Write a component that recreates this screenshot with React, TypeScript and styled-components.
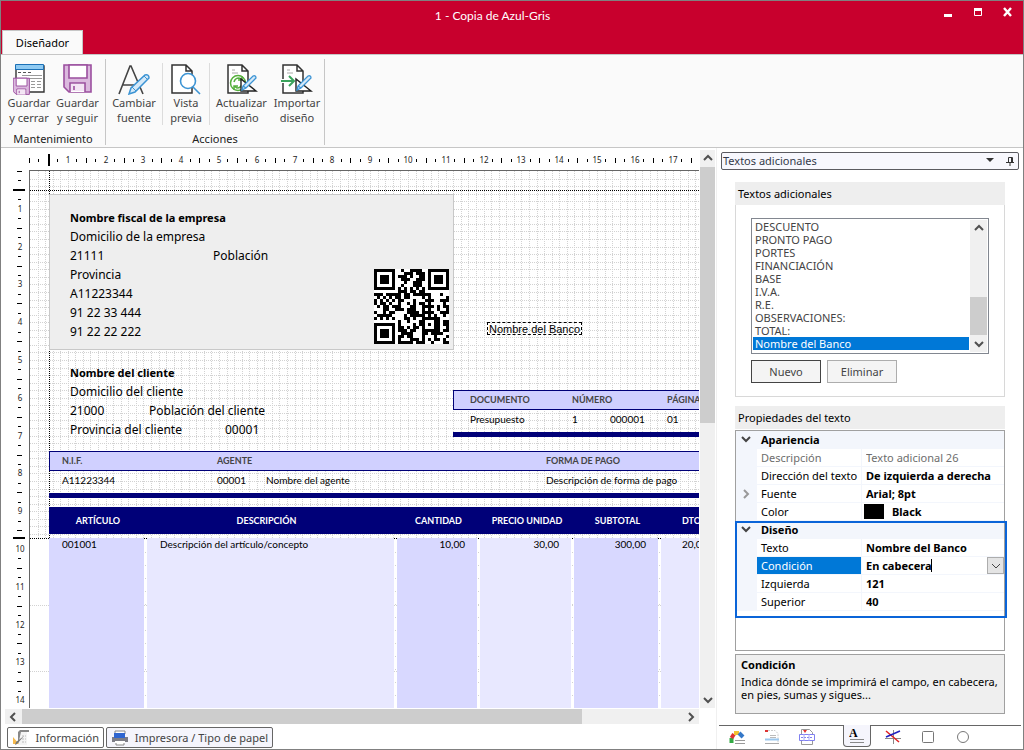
import React from "react";
import styled, { createGlobalStyle, css } from "styled-components";

const ui = `"Noto Sans", "Open Sans", sans-serif`;
const narrow = `Lato, "Noto Sans", sans-serif`;
const c = {
  brand: "#c8002d",
  chrome: "#fafafa",
  line: "#c6c6c6",
  navy: "#000078",
  lilac: "#d0d0ff",
  select: "#0078d7",
  track: "#f0f0f0",
  thumb: "#cdcdcd",
  frame: "#a0a0a0",
  purple: "#9b4f9f",
  blue: "#3c94d4",
  green: "#3aa35c",
};

const GlobalStyle = createGlobalStyle`
  *, *::before, *::after { box-sizing: border-box; }
  body { margin: 0; background: #fff; font-family: ${ui}; font-size: 11px; line-height: 15px; color: #000; }
  button, input { font: inherit; color: inherit; margin: 0; padding: 0; border: 0; background: none; }
  h2, p, ul { margin: 0; padding: 0; font: inherit; list-style: none; }
  svg { display: block; flex: none; }
`;

/* ---------- window frame ---------- */

const Window = styled.div`
  display: flex;
  flex-direction: column;
  min-height: 100vh;
  border: 1px solid #808080;
`;

const TitleBar = styled.header`
  display: flex;
  flex-direction: column;
  justify-content: space-between;
  height: 53px;
  padding-left: 1px;
  background: ${c.brand};
`;

const TitleRow = styled.div`
  display: grid;
  grid-template-columns: 1fr auto;
  height: 29px;
`;

const Title = styled.h2`
  padding: 7px 0 0 51px;
  font-family: ${narrow};
  font-size: 12px;
  text-align: center;
  color: #fff;
`;

const Controls = styled.div`
  display: flex;
  height: 22px;
  padding-right: 1px;
`;

const ControlButton = styled.button`
  display: flex;
  align-items: center;
  justify-content: center;
  width: 30px;
  color: #fff;
`;

const Tab = styled.button`
  align-self: flex-start;
  width: 81px;
  height: 24px;
  border: 1px solid ${c.line};
  border-bottom: 0;
  background: ${c.chrome};
`;

/* ---------- ribbon ---------- */

const Ribbon = styled.nav`
  display: flex;
  height: 94px;
  padding: 4px 0 2px;
  border-top: 1px solid ${c.line};
  border-bottom: 1px solid ${c.line};
  background: ${c.chrome};
`;

const RibbonGroup = styled.section`
  display: flex;
  flex-direction: column;
  justify-content: space-between;
  border-right: 1px solid ${c.line};
`;

const RibbonButtons = styled.div<{ $pad?: boolean }>`
  display: flex;
  padding: ${(p) => (p.$pad ? "4px 3px 0 4px" : "4px 3px 0 0")};
`;

const RibbonButton = styled.button<{ $w: number; $line?: boolean }>`
  display: flex;
  flex-direction: column;
  align-items: center;
  width: ${(p) => p.$w}px;
  height: 62px;
  line-height: 15px;
  color: #444;
  border-right: ${(p) => (p.$line ? "1px solid #dcdcdc" : "0")};
`;

const RibbonLabel = styled.span`
  white-space: pre;
`;

const GroupName = styled.span`
  text-align: center;
  line-height: 13px;
  color: #222;
`;

/* ---------- designer surface ---------- */

const Body = styled.main`
  display: flex;
  flex: 1;
`;

const Designer = styled.section`
  display: flex;
  flex: 1;
  flex-direction: column;
  min-width: 0;
  border-right: 1px solid ${c.track};
`;

const Surface = styled.div`
  display: grid;
  grid-template-columns: 28px minmax(0, 1fr) 17px;
  grid-template-rows: 22px minmax(400px, 1fr);
  flex: 1;
`;

const RulerStrip = styled.div<{ $across?: boolean }>`
  overflow: hidden;
  ${(p) =>
    p.$across
      ? css`
          grid-column: 2;
          grid-row: 1;
        `
      : css`
          grid-column: 1;
          grid-row: 2;
          contain: size;
        `}
`;

const Canvas = styled.div`
  position: relative;
  grid-column: 2;
  grid-row: 2;
  overflow: hidden;
  border: solid #666;
  border-width: 1px 0 0 1px;
`;

const Placed = styled.div<{ $x: number; $y: number; $w?: number; $h?: number }>`
  position: absolute;
  left: ${(p) => p.$x}px;
  top: ${(p) => p.$y}px;
  ${(p) => p.$w && `width: ${p.$w}px;`}
  ${(p) => p.$h && `height: ${p.$h}px;`}
  white-space: nowrap;
`;

const GridLayer = styled(Placed)`
  overflow: hidden;
`;

const CompanyCard = styled(Placed)`
  padding: 13px 20px;
  border: 1px solid #c8c8c8;
  background: #eee;
`;

const Line = styled.div<{ $bold?: boolean; $first?: number }>`
  display: grid;
  grid-template-columns: ${(p) => p.$first ?? 143}px auto;
  line-height: 19px;
  font-size: ${(p) => (p.$bold ? 11 : 12)}px;
  font-weight: ${(p) => (p.$bold ? 700 : 400)};
`;

const FreeText = styled(Placed)`
  padding-left: 1px;
  border: 1px dashed #000;
  font: 11px / 12px "Liberation Sans", Arial, sans-serif;
`;

const BandTable = styled.table`
  width: 100%;
  table-layout: fixed;
  border-spacing: 0;
  font-family: ${narrow};
  font-size: 10px;
  line-height: 12px;
  text-align: left;
  border-bottom: 5px solid ${c.navy};

  th {
    height: 20px;
    padding: 0;
    font-size: 9px;
    color: #444;
    background: ${c.lilac};
    border: solid ${c.navy};
    border-width: 1px 0;
  }
  th:first-child {
    border-left-width: 1px;
  }
  td {
    height: 22px;
    padding: 0 0 5px;
  }
  td:first-child {
    border-left: 1px solid transparent;
  }
  th:first-child,
  td:first-child {
    padding-left: var(--inset);
  }
`;

const ItemsBand = styled.div`
  position: absolute;
  left: 19px;
  top: 336px;
  bottom: 0;
  width: 702px;
`;

const ItemsTable = styled.table`
  width: 100%;
  height: 100%;
  table-layout: fixed;
  border-spacing: 0;
  font-family: ${narrow};
  font-size: 10px;
  line-height: 12px;

  th {
    height: 31px;
    padding: 1px 0 0;
    font-size: 9px;
    color: #fff;
    background: ${c.navy};
    background-clip: padding-box;
    border-bottom: 4px solid transparent;
  }
  th:nth-child(2) {
    padding-right: 11px;
  }
  td {
    padding: 0 12px 0 13px;
    vertical-align: top;
    text-align: right;
    border-right: 3px solid transparent;
    background: #d8d8ff;
    background-clip: padding-box;
  }
  td:nth-child(even) {
    background-color: #e8e8ff;
  }
  td:last-child {
    background-color: #e8e8ff;
  }
  td:nth-child(-n + 2) {
    text-align: left;
  }
  th:last-child,
  td:last-child {
    padding-left: 21px;
    text-align: left;
  }
`;

/* ---------- scroll bars ---------- */

const ScrollBar = styled.div<{ $across?: boolean }>`
  display: flex;
  flex-direction: ${(p) => (p.$across ? "row" : "column")};
  background: ${c.track};
`;

const ScrollButton = styled.button`
  display: flex;
  align-items: center;
  justify-content: center;
  flex: none;
  width: 17px;
  height: 17px;
  color: #505050;
`;

const Thumb = styled.div<{ $before: number; $size: number; $after: number }>`
  display: flex;
  flex: 1;
  flex-direction: inherit;

  &::before,
  &::after {
    content: "";
    flex: ${(p) => p.$before} 1 0;
  }
  &::after {
    flex-grow: ${(p) => p.$after};
  }
  & > span {
    flex: ${(p) => p.$size} 1 0;
    background: ${c.thumb};
  }
`;

const VerticalScroll = styled(ScrollBar)`
  grid-column: 3;
  grid-row: 1 / 3;
  width: 15px;
  margin: 2px 1px 0;
  align-items: center;

  & > div {
    align-self: stretch;
  }
`;

const HorizontalScroll = styled(ScrollBar)`
  height: 15px;
  margin: 1px 17px 0 4px;
  align-items: center;

  & > div {
    align-self: stretch;
  }
`;

const BottomTabs = styled.div`
  display: flex;
  gap: 2px;
  height: 25px;
  padding: 3px 6px 1px;
`;

const BottomTab = styled.button<{ $w: number; $tint?: boolean }>`
  display: flex;
  align-items: center;
  justify-content: space-between;
  width: ${(p) => p.$w}px;
  padding: 0 4px;
  border: 1px solid #666;
  border-radius: 2px;
  background: ${(p) => (p.$tint ? "#f5f5fc" : "#fff")};
  color: #444;
`;

/* ---------- side panel ---------- */

const Side = styled.aside`
  display: flex;
  flex-direction: column;
  flex: none;
  width: 306px;
  padding: 4px 2px 1px 2px;
`;

const SideHeader = styled.div`
  display: flex;
  align-items: center;
  gap: 12px;
  height: 18px;
  margin: 0 2px 12px;
  padding: 0 4px 1px 1px;
  border: 1px solid #5a5a60;
  border-radius: 2px;
  background: #f7f7fd;
  color: #333a4a;

  span {
    flex: 1;
  }
`;

const GroupBox = styled.section<{ $grow?: boolean }>`
  display: flex;
  flex-direction: column;
  margin: 0 16px;
  ${(p) => p.$grow && "flex: 1;"}
`;

const GroupTitle = styled.h2`
  padding: 4px 3px;
  line-height: 15px;
  background: #eee;
`;

const TextsBox = styled.div`
  margin-bottom: 9px;
  padding: 13px 15px;
  border: 1px solid #d8d8d8;
  border-top: 0;
`;

const ListFrame = styled.div`
  display: flex;
  height: 136px;
  padding: 1px;
  border: 1px solid #828790;
`;

const List = styled.ul`
  flex: 1;
  padding-right: 1px;
  color: #444;
`;

const ListItem = styled.li<{ $on?: boolean }>`
  padding-left: 2px;
  line-height: 13px;
  ${(p) => p.$on && `background: ${c.select}; color: #fff;`}
`;

const ButtonRow = styled.div`
  display: flex;
  gap: 6px;
  padding-top: 6px;
`;

const PushButton = styled.button<{ $main?: boolean }>`
  width: 70px;
  height: 23px;
  border: 1px solid ${(p) => (p.$main ? "#444" : "#adadad")};
  background: #f4f4f4;
  color: #444;
`;

const PropertyGrid = styled.div`
  flex: 1;
  margin-top: 1px;
  border: 1px solid ${c.frame};
`;

const Category = styled.div`
  display: grid;
  grid-template-columns: 25px 1fr;
  align-items: center;
  height: 18px;
  padding-bottom: 2px;
  background: #f3f6fc;
  font-weight: 700;
`;

const Chevron = styled.span`
  display: flex;
  justify-content: center;
  padding-right: 6px;
  color: #444;
`;

const Property = styled.div<{ $dim?: boolean }>`
  display: grid;
  grid-template-columns: 21px 105px minmax(0, 1fr);
  height: 18px;
  font-weight: ${(p) => (p.$dim ? 400 : 700)};
  color: ${(p) => (p.$dim ? "#6d6d6d" : "#000")};
`;

const Gutter = styled.span`
  display: flex;
  align-items: center;
  justify-content: center;
  padding-right: 2px;
  background: #f3f6fc;
  color: #999;
`;

const PropertyName = styled.label<{ $on?: boolean }>`
  padding-left: 4px;
  border-right: 1px solid #f3f6fc;
  border-bottom: 1px solid #f3f6fc;
  font-weight: 400;
  line-height: 17px;
  ${(p) => p.$on && `background: ${c.select}; color: #fff;`}
`;

const PropertyValue = styled.div`
  display: flex;
  align-items: center;
  padding-left: 4px;
  border-bottom: 1px solid #f3f6fc;
`;

const Field = styled.input<{ $fit?: boolean }>`
  ${(p) => (p.$fit ? "field-sizing: content;" : "flex: 1;")}
  min-width: 0;
  height: 17px;
  outline: 0;
`;

const Caret = styled.span`
  width: 1px;
  height: 13px;
  margin-right: auto;
  background: #000;
`;

const Swatch = styled.span`
  width: 20px;
  height: 15px;
  margin: 0 8px 0 -2px;
  background: #000;
`;

const DropButton = styled.button`
  display: flex;
  align-items: center;
  justify-content: center;
  width: 17px;
  height: 17px;
  border: 1px solid #adadad;
  background: #e4e4e4;
  color: #444;
`;

const Section = styled.div<{ $focus?: boolean }>`
  position: relative;
  ${(p) =>
    p.$focus &&
    css`
      &::after {
        content: "";
        position: absolute;
        inset: 0 -3px -7px -1px;
        border: 2px solid #0a64d8;
        pointer-events: none;
      }
    `}
`;

const Help = styled.div`
  height: 60px;
  margin: 3px 0 11px;
  padding: 2px 5px;
  border: 1px solid ${c.frame};
  background: #efefef;
  line-height: 13px;

  strong {
    display: block;
    padding-bottom: 3px;
    line-height: 15px;
  }
`;

const ToolTabs = styled.div`
  display: flex;
  height: 23px;
  border-top: 1px solid #666;
`;

const ToolTab = styled.button<{ $on?: boolean }>`
  display: flex;
  align-items: center;
  justify-content: center;
  width: 35px;
  ${(p) =>
    p.$on &&
    css`
      width: 28px;
      margin: -1px 4px 1px 19px;
      border: 1px solid #666;
      border-top: 0;
      border-radius: 0 0 4px 4px;
      background: #f5f5fc;
    `}
`;

/* ---------- drawings ---------- */

type Dir = "up" | "down" | "left" | "right";
const chevrons: Record<Dir, string> = {
  up: "M1 6l4-4 4 4",
  down: "M1 3l4 4 4-4",
  left: "M6 1L2 5l4 4",
  right: "M3 1l4 4-4 4",
};
const Arrow = ({ dir, width = 2 }: { dir: Dir; width?: number }) => (
  <svg width="10" height="10" viewBox="0 0 10 10" fill="none" stroke="currentColor" strokeWidth={width}>
    <path d={chevrons[dir]} />
  </svg>
);

const Scroll = ({ across, before, size, after }: { across?: boolean; before: number; size: number; after: number }) => {
  const Bar = across ? HorizontalScroll : VerticalScroll;
  return (
    <Bar $across={across}>
      <ScrollButton aria-label="Anterior"><Arrow dir={across ? "left" : "up"} /></ScrollButton>
      <Thumb $before={before} $size={size} $after={after}><span /></Thumb>
      <ScrollButton aria-label="Siguiente"><Arrow dir={across ? "right" : "down"} /></ScrollButton>
    </Bar>
  );
};

const Floppy = () => (
  <g stroke={c.purple} strokeWidth="1.6">
    <path d="M2 2h27v27H7l-5-5z" fill="#dbb9de" />
    <path d="M7 2h18v13H7zM8 29v-9h15v9" fill="#fff" />
    <path d="M9 21h13v7H9z" fill="#f3e4f4" stroke="none" />
    <path d="M12 23v4" />
  </g>
);

const Page = () => (
  <path d="M2 2h14l6 6v22H2zM16 2v6h6" fill="#fff" stroke="#333" strokeWidth="1.5" />
);

const Pen = () => (
  <g fill="#d5e9f8" stroke={c.blue} strokeWidth="1.3">
    <path d="M27 13q3-1 3 2L20 25l-4 2 1-4z" />
    <path d="M17 23l3 2" />
  </g>
);

const icons = {
  saveClose: (
    <>
      <path d="M3 3h28v26H3z" fill="#fff" stroke="#333" strokeWidth="1.4" />
      <path d="M2.500 1.500h28v5h-28z" fill="#8fcaf2" stroke="#1b70b6" />
      <path d="M5 9.500h3M10 9.500h3M15 9.500h3" stroke="#555" />
      <path d="M9 12.500h20M9 15.500h20" stroke="#999" />
      <path d="M18 18.500h4m2 0h4M18 21.500h4m2 0h4M18 24.500h4m2 0h4" stroke="#999" />
      <g transform="translate(-1 14) scale(.6)"><Floppy /></g>
    </>
  ),
  save: <Floppy />,
  font: (
    <>
      <path d="M1 31L12 3h1l12 28M5 22h15" fill="none" stroke="#444" strokeWidth="1.6" />
      <path d="M27 12q4-1 4 3L17 29l-6 2 2-6z" fill="#d5e9f8" stroke={c.blue} strokeWidth="1.5" />
      <path d="M26 13l4 4M14 24l4 4" stroke={c.blue} />
    </>
  ),
  preview: (
    <>
      <Page />
      <circle cx="18" cy="18" r="7.5" fill="#fff" stroke={c.blue} strokeWidth="1.6" />
      <path d="M23 24l7 7" stroke={c.blue} strokeWidth="1.6" />
    </>
  ),
  update: (
    <>
      <Page />
      <path d="M6 7h3M6 10h6" stroke="#aaa" />
      <g fill="none" stroke="#55b03c" strokeWidth="1.5">
        <circle cx="12" cy="20" r="7.5" fill="#fff" />
        <path d="M8 19q1-4 5-4l3 2m0-4v4h-4M16 21q-1 4-5 4l-3-2m0 4v-4h4" />
      </g>
      <path d="M15 16v12h15z" fill="#fff" stroke="#222" strokeWidth="1.4" />
      <Pen />
    </>
  ),
  import: (
    <>
      <Page />
      <path d="M6 7h3M6 10h6" stroke="#aaa" />
      <path d="M0 18h12M8 13l5 5-5 5" fill="none" stroke="#fff" strokeWidth="4" />
      <path d="M0 18h12M8 13l5 5-5 5" fill="none" stroke={c.green} strokeWidth="2" />
      <path d="M15 16v12h15z" fill="#fff" stroke="#222" strokeWidth="1.4" />
      <Pen />
    </>
  ),
};

const RibbonIcon = ({ name }: { name: keyof typeof icons }) => (
  <svg width="32" height="32" viewBox="0 0 32 32" fill="none">{icons[name]}</svg>
);

/* ---------- rulers and grid: one centimetre is 37.8 px ---------- */

const CM = 37.8;
const at = (cm: number) => Math.round(cm * CM);

const Ruler = ({ across, count, marks }: { across?: boolean; count: number; marks: number[] }) => (
  <RulerStrip $across={across}>
    <svg width={across ? 1200 : 28} height={across ? 22 : 1200} shapeRendering="crispEdges">
      {Array.from({ length: count }, (_, q) => {
        const p = at(q / 4) + (across ? 0 : 1);
        if (q % 4 === 0 && q > 0)
          return (
            <text
              key={q}
              x={across ? p + 1 : 19}
              y={across ? 15 : p + 3}
              textAnchor="middle"
              fontFamily={ui}
              fontSize="8"
              fill="#222"
            >
              {q / 4}
            </text>
          );
        if (marks.some((m) => Math.abs(m - p) < 4)) return null;
        const long = q % 2 === 0 ? 5 : 3;
        return across ? (
          <rect key={q} x={p} y={long === 5 ? 10 : 11} width="1" height={long} />
        ) : (
          <rect key={q} x={long === 5 ? 16 : 17} y={p} width={long} height="1" />
        );
      })}
      {marks.map((m) =>
        across ? (
          <rect key={m} x={m - 1} y="6" width="2" height="12" />
        ) : (
          <rect key={m} x="12" y={m - 1} width="12" height="2" />
        ),
      )}
    </svg>
  </RulerStrip>
);

const steps = (n: number) => Array.from({ length: n }, (_, i) => Math.round((i + 1) * CM * 0.2) + 0.5);

const DotGrid = () => (
  <svg width="1200" height="900" stroke="#d2d2d2" strokeDasharray="1 1" shapeRendering="crispEdges">
    {steps(150).map((x) => <path key={x} d={`M${x} 0V367`} />)}
    {steps(48).map((y) => <path key={y} d={`M0 ${y}H1200`} />)}
    <path d="M0 434.5H1200M0 500.5H1200M0 567.5H1200" />
    <path d="M115.5 381V900M365.5 381V900M448.5 381V900M542.5 381V900M629.5 381V900" strokeDasharray="1 12" />
    <path d="M19.5 0V367M0 19.5H1200M0 367.5H1200" stroke="#000" />
  </svg>
);

/* ---------- QR symbol, version 2-L, mask 0 ---------- */

const EXP: number[] = [];
const LOG: number[] = [];
for (let i = 0, v = 1; i < 255; i++) {
  EXP[i] = v;
  LOG[v] = i;
  v <<= 1;
  if (v & 256) v ^= 0x11d;
}
const mul = (a: number, b: number) => (a && b ? EXP[(LOG[a] + LOG[b]) % 255] : 0);

function errorWords(data: number[], n: number) {
  let gen = [1];
  for (let i = 0; i < n; i++) {
    const next = new Array(gen.length + 1).fill(0);
    gen.forEach((g, j) => {
      next[j] ^= g;
      next[j + 1] ^= mul(g, EXP[i]);
    });
    gen = next;
  }
  const msg = [...data, ...new Array(n).fill(0)];
  data.forEach((_, i) => {
    const lead = msg[i];
    gen.forEach((g, j) => (msg[i + j] ^= mul(g, lead)));
  });
  return msg.slice(data.length);
}

function qrModules(text: string) {
  const N = 25;
  const byte = (v: number) => v.toString(2).padStart(8, "0");
  let bits = "0100" + byte(text.length) + [...text].map((s) => byte(s.charCodeAt(0))).join("") + "0000";
  const data = (bits.match(/.{8}/g) ?? []).map((b) => parseInt(b, 2));
  for (let p = 0; data.length < 34; p++) data.push(p % 2 ? 17 : 236);
  bits = [...data, ...errorWords(data, 10)].map(byte).join("") + "0000000";

  const m: (number | null)[][] = Array.from({ length: N }, () => new Array(N).fill(null));
  for (const [R, C] of [[3, 3], [3, 21], [21, 3]])
    for (let r = -4; r <= 4; r++)
      for (let k = -4; k <= 4; k++) {
        const ring = Math.max(Math.abs(r), Math.abs(k));
        if (m[R + r] && C + k >= 0 && C + k < N) m[R + r][C + k] = ring === 4 || ring === 2 ? 0 : 1;
      }
  for (let r = -2; r <= 2; r++)
    for (let k = -2; k <= 2; k++) m[18 + r][18 + k] = Math.max(Math.abs(r), Math.abs(k)) === 1 ? 0 : 1;
  for (let i = 8; i < 17; i++) m[6][i] = m[i][6] = i % 2 ? 0 : 1;

  const format = 0x77c4;
  const f = (i: number) => (format >> i) & 1;
  for (let i = 0; i < 6; i++) m[i][8] = f(i);
  m[7][8] = f(6);
  m[8][8] = f(7);
  m[8][7] = f(8);
  for (let i = 9; i < 15; i++) m[8][14 - i] = f(i);
  for (let i = 0; i < 8; i++) m[8][N - 1 - i] = f(i);
  for (let i = 8; i < 15; i++) m[N - 15 + i][8] = f(i);
  m[N - 8][8] = 1;

  let k = 0;
  for (let right = N - 1; right >= 1; right -= 2) {
    if (right === 6) right = 5;
    const up = ((right + 1) & 2) === 0;
    for (let v = 0; v < N; v++)
      for (let j = 0; j < 2; j++) {
        const r = up ? N - 1 - v : v;
        const col = right - j;
        if (m[r][col] === null) m[r][col] = +bits[k++] ^ ((r + col) % 2 === 0 ? 1 : 0);
      }
  }
  return m;
}

const qrPath = qrModules("https://www.sdelsol.com")
  .flatMap((row, y) => row.map((v, x) => (v ? `M${x} ${y}h1v1h-1z` : "")))
  .join("");

/* ---------- content ---------- */

const texts = [
  "DESCUENTO", "PRONTO PAGO", "PORTES", "FINANCIACIÓN", "BASE",
  "I.V.A.", "R.E.", "OBSERVACIONES:", "TOTAL:", "Nombre del Banco",
];

const Prop = ({ id, name, value, dim, on, gutter, children }: {
  id: string; name: string; value: string; dim?: boolean; on?: boolean;
  gutter?: React.ReactNode; children?: React.ReactNode;
}) => (
  <Property $dim={dim}>
    <Gutter>{gutter}</Gutter>
    <PropertyName htmlFor={id} $on={on}>{name}</PropertyName>
    <PropertyValue>
      {!on && children}
      <Field id={id} defaultValue={value} readOnly={dim} $fit={on} />
      {on && children}
    </PropertyValue>
  </Property>
);

const inset = (px: number) => ({ "--inset": `${px}px` }) as React.CSSProperties;

const Report = () => (
  <Canvas>
    <GridLayer $x={0} $y={0}><DotGrid /></GridLayer>
    <CompanyCard $x={19} $y={23} $w={405} $h={156}>
      <Line $bold>Nombre fiscal de la empresa</Line>
      <Line>Domicilio de la empresa</Line>
      <Line><span>21111</span><span>Población</span></Line>
      <Line>Provincia</Line>
      <Line>A11223344</Line>
      <Line>91 22 33 444</Line>
      <Line>91 22 22 222</Line>
    </CompanyCard>
    <Placed $x={344} $y={98}>
      <svg width="75" height="75" viewBox="0 0 25 25" shapeRendering="crispEdges">
        <rect width="25" height="25" fill="#fff" />
        <path d={qrPath} />
      </svg>
    </Placed>
    <FreeText $x={457} $y={151} $w={95} $h={13}>Nombre del Banco</FreeText>
    <Placed $x={40} $y={192}>
      <Line $bold>Nombre del cliente</Line>
      <Line>Domicilio del cliente</Line>
      <Line $first={79}><span>21000</span><span>Población del cliente</span></Line>
      <Line $first={155}><span>Provincia del cliente</span><span>00001</span></Line>
    </Placed>
    <Placed $x={423} $y={219} $w={320}>
      <BandTable style={inset(16)}>
        <colgroup><col width="119" /><col width="38" /><col width="57" /><col /></colgroup>
        <thead><tr><th>DOCUMENTO</th><th colSpan={2}>NÚMERO</th><th>PÁGINA</th></tr></thead>
        <tbody><tr><td>Presupuesto</td><td>1</td><td>000001</td><td>01</td></tr></tbody>
      </BandTable>
    </Placed>
    <Placed $x={19} $y={280} $w={702}>
      <BandTable style={inset(12)}>
        <colgroup><col width="168" /><col width="49" /><col width="280" /><col /></colgroup>
        <thead><tr><th>N.I.F.</th><th colSpan={2}>AGENTE</th><th>FORMA DE PAGO</th></tr></thead>
        <tbody>
          <tr><td>A11223344</td><td>00001</td><td>Nombre del agente</td><td>Descripción de forma de pago</td></tr>
        </tbody>
      </BandTable>
    </Placed>
    <ItemsBand>
      <ItemsTable>
        <colgroup>
          <col width="98" /><col width="250" /><col width="83" /><col width="94" /><col width="87" /><col />
        </colgroup>
        <thead>
          <tr>
            <th>ARTÍCULO</th><th>DESCRIPCIÓN</th><th>CANTIDAD</th><th>PRECIO UNIDAD</th><th>SUBTOTAL</th>
            <th>DTO.</th>
          </tr>
        </thead>
        <tbody>
          <tr>
            <td>001001</td><td>Descripción del artículo/concepto</td><td>10,00</td><td>30,00</td>
            <td>300,00</td><td>20,00</td>
          </tr>
        </tbody>
      </ItemsTable>
    </ItemsBand>
  </Canvas>
);

export default function App() {
  return (
    <>
      <GlobalStyle />
      <Window>
        <TitleBar>
          <TitleRow>
            <Title>1 - Copia de Azul-Gris</Title>
            <Controls>
              <ControlButton aria-label="Minimizar">
                <svg width="9" height="10"><path d="M1 7h8v3H1z" fill="currentColor" /></svg>
              </ControlButton>
              <ControlButton aria-label="Maximizar">
                <svg width="9" height="10">
                  <path d="M1.500 2.500v6h7v-6z" fill="none" stroke="currentColor" />
                  <path d="M1 1h8v3H1z" fill="currentColor" />
                </svg>
              </ControlButton>
              <ControlButton aria-label="Cerrar">
                <svg width="9" height="10"><path d="M1 1l7 8M8 1L1 9" stroke="currentColor" strokeWidth="2.4" /></svg>
              </ControlButton>
            </Controls>
          </TitleRow>
          <Tab>Diseñador</Tab>
        </TitleBar>

        <Ribbon>
          <RibbonGroup>
            <RibbonButtons $pad>
              <RibbonButton $w={48}><RibbonIcon name="saveClose" /><RibbonLabel>{"Guardar\ny cerrar"}</RibbonLabel></RibbonButton>
              <RibbonButton $w={49}><RibbonIcon name="save" /><RibbonLabel>{"Guardar\ny seguir"}</RibbonLabel></RibbonButton>
            </RibbonButtons>
            <GroupName>Mantenimiento</GroupName>
          </RibbonGroup>
          <RibbonGroup>
            <RibbonButtons>
              <RibbonButton $w={57} $line><RibbonIcon name="font" /><RibbonLabel>{"Cambiar\nfuente"}</RibbonLabel></RibbonButton>
              <RibbonButton $w={47} $line><RibbonIcon name="preview" /><RibbonLabel>{"Vista\nprevia"}</RibbonLabel></RibbonButton>
              <RibbonButton $w={63}><RibbonIcon name="update" /><RibbonLabel>{"Actualizar\ndiseño"}</RibbonLabel></RibbonButton>
              <RibbonButton $w={48}><RibbonIcon name="import" /><RibbonLabel>{"Importar\ndiseño"}</RibbonLabel></RibbonButton>
            </RibbonButtons>
            <GroupName>Acciones</GroupName>
          </RibbonGroup>
        </Ribbon>

        <Body>
          <Designer>
            <Surface>
              <Ruler across count={71} marks={[20]} />
              <Ruler count={57} marks={[20, 368]} />
              <Report />
              <Scroll before={0} size={256} after={269} />
            </Surface>
            <Scroll across before={0} size={559} after={100} />
            <BottomTabs>
              <BottomTab $w={97}>
                <svg width="18" height="18" viewBox="0 0 18 18">
                  <path d="M8 1h9v2H9v11H6V3z" fill="#888" />
                  <path d="M9 3h6v13H6z" fill="#f4f4f4" />
                  <path d="M10 7h4M10 10h4M10 13h4" stroke="#bbb" strokeDasharray="2 1" />
                  <path d="M1 8l6 7H1z" fill="#f5b94c" /><path d="M12 7L5 15l-2 1 1-3z" fill="#777" />
                </svg>
                Información
              </BottomTab>
              <BottomTab $w={167} $tint>
                <svg width="18" height="18" viewBox="0 0 18 18">
                  <path d="M4 2h10v3H4zM5 13h8v3H5z" fill="#fff" stroke="#888" />
                  <path d="M1 8h16v5H1z" fill="#7d7d86" /><path d="M3 4h11v5H3z" fill="#2f66d0" />
                  <path d="M4 12h10v2H4z" fill="#fff" />
                </svg>
                Impresora / Tipo de papel
              </BottomTab>
            </BottomTabs>
          </Designer>

          <Side>
            <SideHeader>
              <span>Textos adicionales</span>
              <svg width="8" height="5"><path d="M0 0h8L4 4z" fill="#333" /></svg>
              <svg width="8" height="10" fill="none" stroke="#333"><path d="M2.500 6V1.500h4V6M0 6.500h8M4 7v3M5.500 1v5" /></svg>
            </SideHeader>

            <GroupBox>
              <GroupTitle>Textos adicionales</GroupTitle>
              <TextsBox>
                <ListFrame>
                  <List role="listbox" aria-label="Textos adicionales">
                    {texts.map((t) => {
                      const on = t === "Nombre del Banco";
                      return <ListItem key={t} role="option" aria-selected={on} $on={on}>{t}</ListItem>;
                    })}
                  </List>
                  <ScrollBar>
                    <ScrollButton aria-label="Subir"><Arrow dir="up" /></ScrollButton>
                    <Thumb $before={60} $size={38} $after={0}><span /></Thumb>
                    <ScrollButton aria-label="Bajar"><Arrow dir="down" /></ScrollButton>
                  </ScrollBar>
                </ListFrame>
                <ButtonRow>
                  <PushButton $main>Nuevo</PushButton>
                  <PushButton>Eliminar</PushButton>
                </ButtonRow>
              </TextsBox>
            </GroupBox>

            <GroupBox $grow>
              <GroupTitle>Propiedades del texto</GroupTitle>
              <PropertyGrid>
                <Section>
                  <Category><Chevron><Arrow dir="down" /></Chevron>Apariencia</Category>
                  <Prop id="desc" name="Descripción" value="Texto adicional 26" dim />
                  <Prop id="dir" name="Dirección del texto" value="De izquierda a derecha" />
                  <Prop id="font" name="Fuente" value="Arial; 8pt" gutter={<Arrow dir="right" />} />
                  <Prop id="color" name="Color" value="Black"><Swatch /></Prop>
                </Section>
                <Section $focus>
                  <Category><Chevron><Arrow dir="down" /></Chevron>Diseño</Category>
                  <Prop id="text" name="Texto" value="Nombre del Banco" />
                  <Prop id="cond" name="Condición" value="En cabecera" on>
                    <Caret />
                    <DropButton aria-label="Desplegar"><Arrow dir="down" width={1} /></DropButton>
                  </Prop>
                  <Prop id="left" name="Izquierda" value="121" />
                  <Prop id="top" name="Superior" value="40" />
                </Section>
              </PropertyGrid>
              <Help>
                <strong>Condición</strong>
                Indica dónde se imprimirá el campo, en cabecera, en pies, sumas y sigues...
              </Help>
            </GroupBox>

            <ToolTabs>
              <ToolTab aria-label="Colores">
                <svg width="16" height="16" fill="none" strokeWidth="4">
                  <path d="M2.500 14V9" stroke="#3a4" /><path d="M2.500 9L5 5" stroke="#d33" />
                  <path d="M5 4h5" stroke="#f2c230" /><path d="M10 4l4 4" stroke="#3578c8" />
                  <path d="M6 11.500h10M6 14.500h10" stroke="#999" strokeWidth="1" />
                </svg>
              </ToolTab>
              <ToolTab aria-label="Cabecera">
                <svg width="16" height="16" fill="none">
                  <path d="M4 1.500h7l3 3V15" stroke="#ccc" strokeDasharray="2 1" /><path d="M1 1h3v2H1z" fill="#d33" />
                  <path d="M6 6.500h6M6 8.500h6" stroke="#bbb" /><path d="M1 10.500h14" stroke="#9cc8ee" strokeWidth="2" /><path d="M1 14.500h14" stroke="#aaa" />
                </svg>
              </ToolTab>
              <ToolTab aria-label="Cuerpo">
                <svg width="16" height="16" fill="none">
                  <path d="M2.500 5V.500h8l3 3V15.500h-11V12" stroke="#999" /><path d="M4 1h4L6 4z" fill="#d33" />
                  <path d="M.500 5.500h15v6H.500z" stroke="#8080f0" fill="#fff" /><path d="M2 8.500h12" stroke="#8080f0" strokeDasharray="2 1" />
                  <path d="M5 5v7M10 5v7" stroke="#aaaaf8" />
                </svg>
              </ToolTab>
              <ToolTab aria-label="Textos adicionales" $on>
                <svg width="16" height="16">
                  <text x="0" y="9" fontFamily="Liberation Serif, serif" fontSize="12" fontWeight="700">A</text>
                  <path d="M1 11h14v1H1zM1 14h14v1H1z" fill="#888" />
                </svg>
              </ToolTab>
              <ToolTab aria-label="Líneas">
                <svg width="16" height="16" fill="none">
                  <path d="M8.500 1v14M0 9.500h16" stroke="#888" /><path d="M1 2l13 11" stroke="#e02020" strokeWidth="1.500" />
                  <path d="M15 2L1 8" stroke="#2020c0" strokeWidth="1.500" />
                </svg>
              </ToolTab>
              <ToolTab aria-label="Rectángulos">
                <svg width="14" height="14" fill="none" stroke="#777"><rect x="1.500" y="1.500" width="11" height="11" rx="1" /></svg>
              </ToolTab>
              <ToolTab aria-label="Elipses">
                <svg width="14" height="14" fill="none" stroke="#777"><circle cx="7" cy="7" r="5.500" /></svg>
              </ToolTab>
            </ToolTabs>
          </Side>
        </Body>
      </Window>
    </>
  );
}
